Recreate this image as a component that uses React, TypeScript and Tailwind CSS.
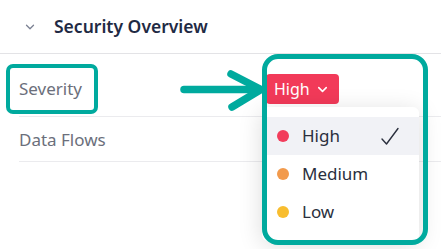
import { ChevronDown } from "lucide-react";

const levels = [
  { name: "High", dot: "bg-[#f23d5c]", selected: true },
  { name: "Medium", dot: "bg-[#f29a4c]", selected: false },
  { name: "Low", dot: "bg-[#f8bd2f]", selected: false },
];

export default function App() {
  return (
    <div className="relative w-[441px] h-[249px] overflow-hidden bg-white font-['Noto_Sans',sans-serif]">
      {/* Section header */}
      <div className="flex h-[54px] items-center gap-[17px] border-b border-[#e3e3e6] pl-[23px]">
        <ChevronDown className="h-[14px] w-[14px] text-[#7b8193]" strokeWidth={2.2} />
        <span className="text-[17.5px] font-semibold text-[#1f2a44]">Security Overview</span>
      </div>

      {/* Properties */}
      <div className="pl-[19px]">
        <div className="flex h-[63px] items-center border-b border-[#ebebee] pt-[8px]">
          <span className="w-[247px] text-[17px] text-[#6b6f7b]">Severity</span>
          <div className="relative">
            <button className="flex h-[30px] items-center gap-[5px] rounded-[4px] bg-[#f23a59] pl-[8px] pr-[9px] text-[16px] text-white">
              High
              <ChevronDown className="h-[15px] w-[15px]" strokeWidth={2.5} />
            </button>
          </div>
        </div>
        <div className="flex h-[45px] items-center border-b border-[#ebebee] pt-[1px]">
          <span className="text-[17px] text-[#6b6f7b]">Data Flows</span>
        </div>
      </div>

      {/* Dropdown menu */}
      <div className="absolute left-[262px] top-[107px] w-[157px] rounded-[6px] bg-white py-[10px] shadow-[0_4px_24px_rgba(0,0,0,0.14)]">
        {levels.map((l) => (
          <div
            key={l.name}
            className={`flex h-[38px] items-center pl-[15px] pr-[20px] ${l.selected ? "bg-[#f1f2f6]" : ""}`}
          >
            <span className={`h-[12px] w-[12px] rounded-full ${l.dot}`} />
            <span className="ml-[13px] flex-1 text-[17px] text-[#2a2f3d]">{l.name}</span>
            {l.selected && (
              <svg width="18" height="19" viewBox="0 0 18 19" fill="none">
                <path d="M1 12 L5.5 17 L17 1.5" stroke="#2a2f3d" strokeWidth="1.4" strokeLinecap="round" strokeLinejoin="round" />
              </svg>
            )}
          </div>
        ))}
      </div>

      {/* Annotations */}
      <div className="absolute left-[6px] top-[64px] h-[50px] w-[92px] rounded-[7px] border-[4px] border-[#00aa9e]" />
      <div className="absolute left-[262px] top-[54px] h-[191px] w-[166px] rounded-[16px] border-[5px] border-[#00aa9e]" />
      <svg className="absolute left-[170px] top-[65px]" width="100" height="50" viewBox="0 0 100 50" fill="none">
        <path d="M14 24.5 H90" stroke="#00aa9e" strokeWidth="7.5" strokeLinecap="round" />
        <path d="M61 9 L91 24.5 L62 42" stroke="#00aa9e" strokeWidth="7.5" strokeLinecap="round" strokeLinejoin="round" />
      </svg>
    </div>
  );
}
